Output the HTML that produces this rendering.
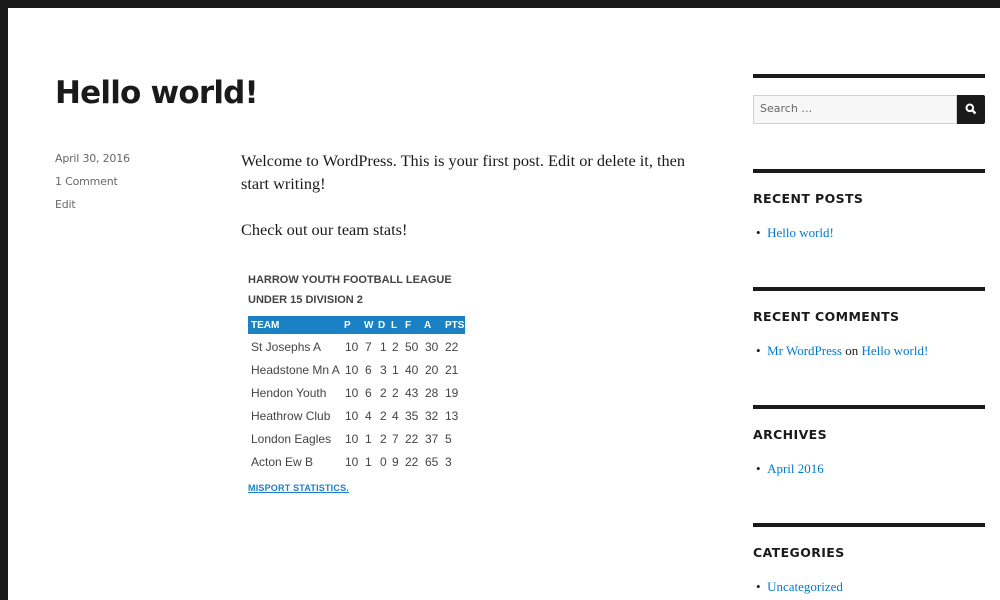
<!DOCTYPE html>
<html><head><meta charset="utf-8"><style>
*{margin:0;padding:0;box-sizing:border-box}
body{width:1000px;height:600px;overflow:hidden;background:#1a1a1a;position:relative;font-family:"Liberation Sans",sans-serif}
.page{position:absolute;left:8px;top:8px;width:992px;height:592px;background:#fff}
.a{position:absolute;white-space:nowrap}
h1{position:absolute;left:55px;top:75px;font:bold 31px/1.2 "DejaVu Sans",sans-serif;color:#1a1a1a;letter-spacing:-0.8px}
.meta{font:11px "DejaVu Sans",sans-serif;color:#686868;left:55px;letter-spacing:-0.2px}
.serif{font-family:"Liberation Serif",serif;font-size:16.3px;color:#1a1a1a}
.t{font-family:"Liberation Sans",sans-serif;font-size:12px;color:#444;line-height:23px}
.th{font-weight:bold;color:#fff;font-size:10px}
.bar{position:absolute;left:753px;width:232px;height:4px;background:#1a1a1a}
.wt{position:absolute;left:753px;font:bold 12.5px "DejaVu Sans",sans-serif;letter-spacing:0.4px;color:#1a1a1a}
.li{position:absolute;left:756px;font:13px "Liberation Serif",serif;color:#1a1a1a}
.li a{color:#007acc;text-decoration:none}
</style></head><body>
<div class="page"></div>
<h1>Hello world!</h1>
<div class="a meta" style="top:152px">April 30, 2016</div>
<div class="a meta" style="top:175px">1 Comment</div>
<div class="a meta" style="top:198px">Edit</div>
<div class="a serif" style="left:241px;top:151px">Welcome to WordPress. This is your first post. Edit or delete it, then</div>
<div class="a serif" style="left:241px;top:174px">start writing!</div>
<div class="a serif" style="left:241px;top:220px">Check out our team stats!</div>
<div class="a t" style="left:248px;top:269px;font-weight:bold;font-size:11px">HARROW YOUTH FOOTBALL LEAGUE</div>
<div class="a t" style="left:248px;top:289px;font-weight:bold;font-size:11px">UNDER 15 DIVISION 2</div>
<div style="position:absolute;left:248px;top:316px;width:217px;height:18px;background:#1b81c5"></div>
<div class="a th" style="left:251px;top:320px">TEAM</div>
<div class="a th" style="left:344px;top:320px">P</div>
<div class="a th" style="left:364px;top:320px">W</div>
<div class="a th" style="left:378px;top:320px">D</div>
<div class="a th" style="left:391px;top:320px">L</div>
<div class="a th" style="left:405px;top:320px">F</div>
<div class="a th" style="left:424px;top:320px">A</div>
<div class="a th" style="left:445px;top:320px">PTS</div>
<div class="a t" style="left:251px;top:336px">St Josephs A<br>Headstone Mn A<br>Hendon Youth<br>Heathrow Club<br>London Eagles<br>Acton Ew B</div>
<div class="a t" style="left:345px;top:336px">10<br>10<br>10<br>10<br>10<br>10</div>
<div class="a t" style="left:365px;top:336px">7<br>6<br>6<br>4<br>1<br>1</div>
<div class="a t" style="left:380px;top:336px">1<br>3<br>2<br>2<br>2<br>0</div>
<div class="a t" style="left:392px;top:336px">2<br>1<br>2<br>4<br>7<br>9</div>
<div class="a t" style="left:405px;top:336px">50<br>40<br>43<br>35<br>22<br>22</div>
<div class="a t" style="left:425px;top:336px">30<br>20<br>28<br>32<br>37<br>65</div>
<div class="a t" style="left:445px;top:336px">22<br>21<br>19<br>13<br>5<br>3</div>
<div class="a" style="left:248px;top:483px;font:bold 9px 'Liberation Sans',sans-serif;color:#1b81c5;text-decoration:underline;letter-spacing:0.2px">MISPORT STATISTICS.</div>

<div class="bar" style="top:74px"></div>
<div style="position:absolute;left:753px;top:95px;width:204px;height:29px;background:#f7f7f7;border:1px solid #d1d1d1"></div>
<div class="a" style="left:760px;top:102px;font:11px 'DejaVu Sans',sans-serif;color:#686868">Search …</div>
<div style="position:absolute;left:957px;top:95px;width:28px;height:29px;background:#1a1a1a;border-radius:0 2px 2px 0"></div>
<svg style="position:absolute;left:965px;top:103px" width="12" height="12" viewBox="0 0 12 12"><circle cx="4.8" cy="4.8" r="3.3" fill="none" stroke="#fff" stroke-width="2"/><path d="M7.2 7.2L10.5 10.5" stroke="#fff" stroke-width="2.4"/></svg>

<div class="bar" style="top:169px"></div>
<div class="wt" style="top:191px">RECENT POSTS</div>
<div class="li" style="top:225px">• &nbsp;<a>Hello world!</a></div>
<div class="bar" style="top:287px"></div>
<div class="wt" style="top:309px">RECENT COMMENTS</div>
<div class="li" style="top:343px">• &nbsp;<a>Mr WordPress</a> on <a>Hello world!</a></div>
<div class="bar" style="top:405px"></div>
<div class="wt" style="top:427px">ARCHIVES</div>
<div class="li" style="top:461px">• &nbsp;<a>April 2016</a></div>
<div class="bar" style="top:523px"></div>
<div class="wt" style="top:545px">CATEGORIES</div>
<div class="li" style="top:579px">• &nbsp;<a>Uncategorized</a></div>
</body></html>
